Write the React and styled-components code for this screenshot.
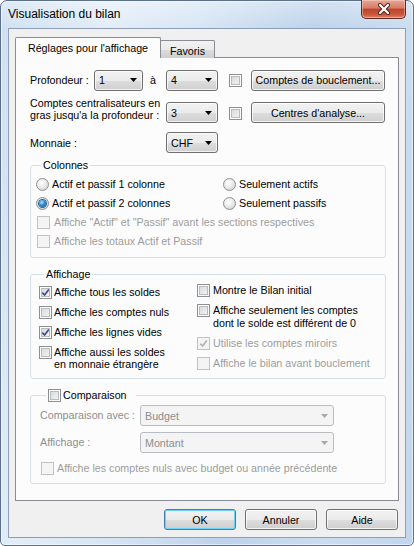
import styled, { createGlobalStyle, css } from "styled-components";

const GlobalStyle = createGlobalStyle`
  html, body { margin: 0; padding: 0; background: #ffffff; }
  body {
    font-family: "Liberation Sans", Arial, sans-serif;
    font-size: 10.7px;
    color: #000;
  }
  * { box-sizing: border-box; }
`;

const Window = styled.div`
  width: 414px;
  height: 546px;
  display: flex;
  flex-direction: column;
  border: 1px solid #5b708c;
  border-radius: 7px 7px 5px 5px;
  padding: 0 7px 7px;
  background:
    linear-gradient(180deg, rgba(255, 255, 255, 0.35) 0, rgba(255, 255, 255, 0) 28px),
    linear-gradient(100deg, #cfe0f2 0%, #e3edf8 22%, #d6e5f4 40%, #bdd3eb 62%, #cadcf0 82%, #c2d6ed 100%);
  box-shadow: inset 0 0 0 1px rgba(255, 255, 255, 0.55);
`;

const TitleBar = styled.div`
  height: 27px;
  display: flex;
  justify-content: space-between;
  align-items: flex-start;
`;

const Title = styled.span`
  font-size: 12px;
  line-height: 27px;
  color: #000;
`;

const CloseButton = styled.div`
  width: 45px;
  height: 19px;
  margin-top: -1px;
  border: 1px solid #5d2b22;
  border-top: none;
  border-radius: 0 0 5px 5px;
  background: linear-gradient(180deg, #e8a795 0%, #d47c69 45%, #c0442c 50%, #c9563b 80%, #e0856b 100%);
  box-shadow: inset 0 0 0 1px rgba(255, 220, 210, 0.45);
  display: flex;
  align-items: center;
  justify-content: center;
`;

const Client = styled.div`
  flex: 1;
  display: flex;
  flex-direction: column;
  border: 1px solid #8d9fb6;
  background: #f0f0f0;
  padding: 8px 6px 0 6px;
`;

const TabStrip = styled.div`
  display: flex;
  align-items: flex-end;
  height: 21px;
  margin-bottom: -1px;
`;

const Tab = styled.div`
  position: relative;
  display: flex;
  align-items: center;
  justify-content: center;
  border: 1px solid #898c95;
  border-bottom: none;
  border-radius: 2px 2px 0 0;
  ${(p) =>
    p.$active
      ? css`
          width: 146px;
          height: 21px;
          background: #fcfcfc;
          z-index: 1;
          padding-bottom: 1px;
        `
      : css`
          width: 55px;
          height: 18px;
          margin-left: -1px;
          padding-top: 2px;
          background: linear-gradient(180deg, #f2f2f2 0%, #ebebeb 50%, #dddddd 51%, #cfcfcf 100%);
        `}
`;

const Panel = styled.div`
  flex: 1;
  border: 1px solid #898c95;
  background: #fcfcfc;
  padding: 11px 12px 0 14px;
  display: flex;
  flex-direction: column;
`;

const Row = styled.div`
  display: flex;
  align-items: ${(p) => p.$align || "center"};
  height: ${(p) => p.$h}px;
  margin-top: ${(p) => p.$mt || 0}px;
`;

const FieldLabel = styled.span`
  width: ${(p) => p.$w}px;
  flex: none;
  line-height: ${(p) => p.$lh || 13}px;
  padding-top: ${(p) => p.$pt || 0}px;
  padding-left: ${(p) => p.$pl || 0}px;
  color: ${(p) => (p.$disabled ? "#8f8f8f" : "#000")};
  white-space: nowrap;
`;

const ComboBox = styled.div`
  width: ${(p) => p.$w}px;
  height: ${(p) => p.$h || 21}px;
  flex: none;
  margin-top: ${(p) => p.$mt || 0}px;
  display: flex;
  align-items: center;
  justify-content: space-between;
  padding: 0 5px 0 4px;
  border-radius: 3px;
  ${(p) =>
    p.$disabled
      ? css`
          border: 1px solid #b9bdc1;
          background: #f4f4f4;
          color: #8d8d8d;
        `
      : css`
          border: 1px solid #707070;
          background: linear-gradient(180deg, #f2f2f2 0%, #ebebeb 50%, #dddddd 51%, #cfcfcf 100%);
          box-shadow: inset 0 0 0 1px rgba(255, 255, 255, 0.7);
        `}
`;

const PushButton = styled.button`
  width: ${(p) => p.$w}px;
  height: 21px;
  flex: none;
  margin-top: ${(p) => p.$mt || 0}px;
  margin-left: ${(p) => p.$ml || 0}px;
  padding: 0;
  font: inherit;
  color: #000;
  white-space: nowrap;
  border-radius: 3px;
  border: 1px solid ${(p) => (p.$default ? "#3c7fb1" : "#707070")};
  background: linear-gradient(180deg, #f2f2f2 0%, #ebebeb 50%, #dddddd 51%, #cfcfcf 100%);
  box-shadow: inset 0 0 0 1px ${(p) => (p.$default ? "#6fd2f5" : "rgba(255, 255, 255, 0.75)")};
`;

const Box = styled.span`
  width: 13px;
  height: 13px;
  flex: none;
  display: inline-flex;
  align-items: center;
  justify-content: center;
  margin-left: ${(p) => p.$ml || 0}px;
  margin-top: ${(p) => p.$mt || 0}px;
  ${(p) =>
    p.$disabled
      ? css`
          border: 1px solid #c2c2c2;
          background: #f4f4f4;
        `
      : css`
          border: 1px solid #8e8f8f;
          background: linear-gradient(135deg, #d3d5d8 0%, #f8f8f8 100%);
          box-shadow: inset 0 0 0 1px #ffffff, inset 0 0 0 2px #b8bcc1;
        `}
`;

const RadioDot = styled.span`
  width: 13px;
  height: 13px;
  flex: none;
  border-radius: 50%;
  border: 1px solid #8e8f8f;
  background: radial-gradient(circle at 40% 35%, #ffffff 0%, #e6e6e6 55%, #c8c8c8 100%);
  display: inline-flex;
  align-items: center;
  justify-content: center;
  &::after {
    content: "";
    display: ${(p) => (p.$checked ? "block" : "none")};
    width: 7px;
    height: 7px;
    border-radius: 50%;
    background: radial-gradient(circle at 40% 35%, #b4e6ff 0%, #2b8ad6 45%, #0c4a8f 100%);
    box-shadow: 0 0 0 1px #2c5f93;
  }
`;

const Option = styled.label`
  display: flex;
  align-items: ${(p) => (p.$multi ? "flex-start" : "center")};
  gap: ${(p) => p.$gap || 3}px;
  line-height: ${(p) => p.$lh || 13}px;
  min-height: 13px;
  white-space: nowrap;
  color: ${(p) => (p.$disabled ? "#9c9c9c" : "#000")};
  padding-left: ${(p) => p.$pl || 0}px;
`;

const Group = styled.fieldset`
  margin: ${(p) => p.$mt || 0}px 0 0 0;
  padding: ${(p) => p.$pad};
  border: 1px solid #d5dfe5;
  border-radius: 3px;
  min-width: 0;
  width: 356px;
`;

const Legend = styled.legend`
  margin-left: ${(p) => p.$ml || 5}px;
  padding: 0 ${(p) => p.$pr || 2}px 0 2px;
  line-height: 13px;
  display: flex;
  align-items: center;
  gap: 2px;
`;

const ColumnsGrid = styled.div`
  display: grid;
  grid-template-columns: 187px auto;
  grid-auto-rows: 19px;
  align-items: center;
`;

const Wide = styled.div`
  grid-column: 1 / 3;
`;

const TwoCols = styled.div`
  display: flex;
`;

const Col = styled.div`
  display: flex;
  flex-direction: column;
  gap: 7px;
  width: ${(p) => p.$w || "auto"};
  padding-top: ${(p) => p.$pt || 0}px;
`;

const Footer = styled.div`
  display: flex;
  justify-content: flex-end;
  gap: 9px;
  padding: 8px 1px 7px 0;
`;

const Arrow = ({ disabled }) => (
  <svg width="7" height="4" viewBox="0 0 7 4">
    <path d="M0 0 H7 L3.5 4 Z" fill={disabled ? "#a8a8a8" : "#000"} />
  </svg>
);

const Combo = ({ value, w, mt, disabled }) => (
  <ComboBox $w={w} $mt={mt} $disabled={disabled}>
    <span>{value}</span>
    <Arrow disabled={disabled} />
  </ComboBox>
);

const CheckBox = ({ checked, disabled, ml, mt }) => (
  <Box $disabled={disabled} $ml={ml} $mt={mt}>
    {checked && (
      <svg width="9" height="9" viewBox="0 0 9 9">
        <path
          d="M1.3 4.6 L3.6 7 L7.8 1.4"
          fill="none"
          stroke={disabled ? "#b4b4b4" : "#3b4d8a"}
          strokeWidth="1.7"
        />
      </svg>
    )}
  </Box>
);

const Check = ({ children, checked, disabled, multi, gap, lh, pl }) => (
  <Option $disabled={disabled} $multi={multi} $gap={gap} $lh={lh} $pl={pl}>
    <CheckBox checked={checked} disabled={disabled} />
    <span>{children}</span>
  </Option>
);

const Radio = ({ children, checked }) => (
  <Option $gap={3}>
    <RadioDot $checked={checked} />
    <span>{children}</span>
  </Option>
);

const CloseGlyph = () => (
  <svg width="14" height="12" viewBox="0 0 14 12">
    <path d="M3 2 L11 10 M11 2 L3 10" stroke="#4a2420" strokeWidth="4" strokeLinecap="round" />
    <path d="M3 2 L11 10 M11 2 L3 10" stroke="#ffffff" strokeWidth="2.2" strokeLinecap="round" />
  </svg>
);

export default function App() {
  return (
    <>
      <GlobalStyle />
      <Window>
        <TitleBar>
          <Title>Visualisation du bilan</Title>
          <CloseButton>
            <CloseGlyph />
          </CloseButton>
        </TitleBar>
        <Client>
          <TabStrip>
            <Tab $active>Réglages pour l'affichage</Tab>
            <Tab>Favoris</Tab>
          </TabStrip>
          <Panel>
            <Row $h={22}>
              <FieldLabel $w={64}>Profondeur :</FieldLabel>
              <Combo value="1" w={49} />
              <FieldLabel $w={23} $pl={7}>à</FieldLabel>
              <Combo value="4" w={52} />
              <CheckBox ml={11} />
              <PushButton $w={134} $ml={9}>Comptes de bouclement...</PushButton>
            </Row>
            <Row $h={28} $mt={5} $align="flex-start">
              <FieldLabel $w={136} $lh={12} $pt={1}>
                Comptes centralisateurs en
                <br />
                gras jusqu'a la profondeur :
              </FieldLabel>
              <Combo value="3" w={52} mt={6} />
              <CheckBox ml={11} mt={11} />
              <PushButton $w={134} $ml={9} $mt={6}>Centres d'analyse...</PushButton>
            </Row>
            <Row $h={21} $mt={8}>
              <FieldLabel $w={136} $pt={2}>Monnaie :</FieldLabel>
              <Combo value="CHF" w={52} />
            </Row>

            <Group $mt={6} $pad="3px 0 6px 5px">
              <Legend>Colonnes</Legend>
              <ColumnsGrid>
                <Radio>Actif et passif 1 colonne</Radio>
                <Radio>Seulement actifs</Radio>
                <Radio checked>Actif et passif 2 colonnes</Radio>
                <Radio>Seulement passifs</Radio>
                <Wide>
                  <Check disabled gap={4} pl={1}>
                    Affiche "Actif" et "Passif" avant les sections respectives
                  </Check>
                </Wide>
                <Wide>
                  <Check disabled gap={4} pl={1}>Affiche les totaux Actif et Passif</Check>
                </Wide>
              </ColumnsGrid>
            </Group>

            <Group $mt={10} $pad="3px 0 8px 8px">
              <Legend>Affichage</Legend>
              <TwoCols>
                <Col $w="158px" $pt={2}>
                  <Check checked gap={2}>Affiche tous les soldes</Check>
                  <Check gap={2}>Affiche les comptes nuls</Check>
                  <Check checked gap={2}>Affiche les lignes vides</Check>
                  <Check multi gap={2} lh={12}>
                    Affiche aussi les soldes
                    <br />
                    en monnaie étrangère
                  </Check>
                </Col>
                <Col>
                  <Check>Montre le Bilan initial</Check>
                  <Check multi>
                    Affiche seulement les comptes
                    <br />
                    dont le solde est différent de 0
                  </Check>
                  <Check checked disabled>Utilise les comptes miroirs</Check>
                  <Check disabled>Affiche le bilan avant bouclement</Check>
                </Col>
              </TwoCols>
            </Group>

            <Group $mt={10} $pad="3px 0 8px 9px">
              <Legend $ml={6} $pr={9}>
                <CheckBox />
                <span>Comparaison</span>
              </Legend>
              <Row $h={21}>
                <FieldLabel $w={100} $disabled>Comparaison avec :</FieldLabel>
                <Combo value="Budget" w={194} disabled />
              </Row>
              <Row $h={21} $mt={6}>
                <FieldLabel $w={100} $disabled>Affichage :</FieldLabel>
                <Combo value="Montant" w={194} disabled />
              </Row>
              <Row $h={13} $mt={9}>
                <Check disabled pl={1}>
                  Affiche les comptes nuls avec budget ou année précédente
                </Check>
              </Row>
            </Group>
          </Panel>
          <Footer>
            <PushButton $w={72} $default>OK</PushButton>
            <PushButton $w={72}>Annuler</PushButton>
            <PushButton $w={72}>Aide</PushButton>
          </Footer>
        </Client>
      </Window>
    </>
  );
}
